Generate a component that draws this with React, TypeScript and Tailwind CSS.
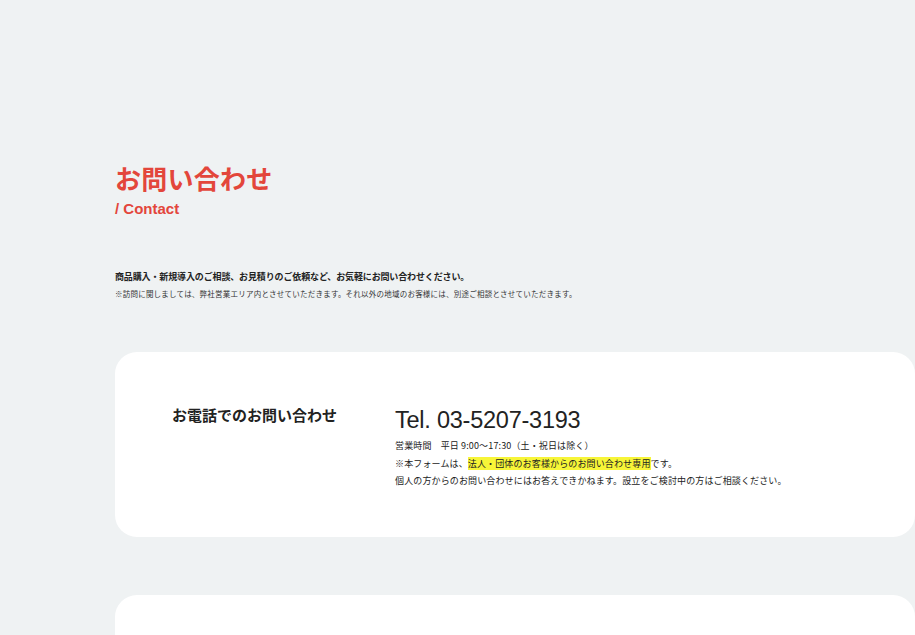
import React from 'react';

const jp = { fontFamily: '"Noto Sans CJK JP", "Noto Sans", sans-serif' };

export default function App() {
  return (
    <div className="min-h-screen bg-[#eff2f3] pl-[115px] pt-[160px] overflow-hidden" style={jp}>
      <h1 className="text-[26px] leading-[36px] font-bold text-[#e3463b] tracking-[0.01em]">お問い合わせ</h1>
      <p className="mt-[3px] text-[15px] leading-[20px] font-bold text-[#e3463b]" style={{ fontFamily: '"Liberation Sans", Arial, sans-serif' }}>
        / Contact
      </p>

      <p className="mt-[50px] text-[9px] leading-[16px] font-bold text-[#222] tracking-[-0.015em]">
        商品購入・新規導入のご相談、お見積りのご依頼など、お気軽にお問い合わせください。
      </p>
      <p className="mt-[1px] text-[7.5px] leading-[16px] text-[#333] tracking-[0.03em]">
        ※訪問に関しましては、弊社営業エリア内とさせていただきます。それ以外の地域のお客様には、別途ご相談とさせていただきます。
      </p>

      <section className="mt-[50px] w-[800px] h-[185px] rounded-[22px] bg-white flex pt-[51px] pl-[57px]">
        <h2 className="w-[223px] shrink-0 text-[15px] leading-[24px] font-bold text-[#222]">お電話でのお問い合わせ</h2>
        <div className="pt-[2px]">
          <p className="text-[23.5px] leading-[30px] text-[#222] tracking-[-0.01em]" style={{ fontFamily: '"Liberation Sans", Arial, sans-serif' }}>
            Tel. 03-5207-3193
          </p>
          <div className="mt-[2px] text-[9px] leading-[17.5px] text-[#222] tracking-[0.015em]">
            <p>営業時間　平日 9:00〜17:30（土・祝日は除く）</p>
            <p>
              ※本フォームは、<span className="bg-[#f7f538]">法人・団体のお客様からのお問い合わせ専用</span>です。
            </p>
            <p>個人の方からのお問い合わせにはお答えできかねます。設立をご検討中の方はご相談ください。</p>
          </div>
        </div>
      </section>

      <section className="mt-[58px] w-[800px] h-[185px] rounded-[22px] bg-white" />
    </div>
  );
}
